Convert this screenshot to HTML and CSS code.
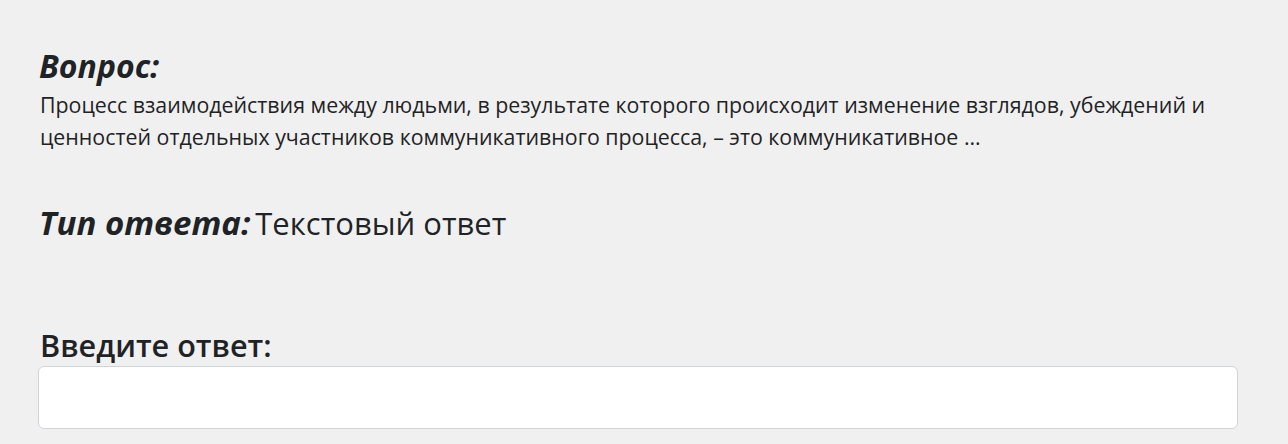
FILE: index.html
```html
<!DOCTYPE html>
<html lang="ru">
<head>
<meta charset="utf-8">
<link rel="stylesheet" href="styles.css">
</head>
<body>
<main class="page">
  <section class="question">
    <h2 class="label">Вопрос:</h2>
    <p class="text">Процесс взаимодействия между людьми, в результате которого происходит изменение взглядов, убеждений и ценностей отдельных участников коммуникативного процесса, – это коммуникативное …</p>
  </section>
  <section class="type">
    <h2 class="label inline">Тип ответа:</h2><span class="type-value">Текстовый ответ</span>
  </section>
  <section class="answer">
    <label class="answer-label" for="ans">Введите ответ:</label>
    <input id="ans" class="answer-input" type="text">
  </section>
</main>
</body>
</html>
```

FILE: styles.css
```css
html, body {
  margin: 0;
  padding: 0;
  background: #f0f0f0;
}
body {
  font-family: "Open Sans", "Noto Sans", sans-serif;
  color: #1f2326;
}
.page {
  padding: 46px 50px 0 38px;
}
.label {
  margin: 0;
  font-size: 32px;
  font-style: italic;
  font-weight: 700;
  line-height: 40px;
  padding-left: 1px;
}
.label.inline {
  display: inline;
}
.text {
  margin: 3px 0 0;
  font-size: 21.35px;
  line-height: 32px;
  padding-left: 2px;
}
.type {
  margin-top: 50px;
  display: flex;
  align-items: baseline;
  gap: 5px;
}
.type .label {
  font-size: 33px;
}
.type-value {
  font-size: 31px;
  line-height: 40px;
}
.answer {
  margin-top: 82px;
  display: flex;
  flex-direction: column;
}
.answer-label {
  font-size: 30.6px;
  font-weight: 600;
  line-height: 40px;
  padding-left: 2px;
  margin-bottom: 1px;
}
.answer-input {
  height: 63px;
  box-sizing: border-box;
  border: 1px solid #ced4da;
  border-radius: 6px;
  background: #fff;
  margin: 0;
}
```
